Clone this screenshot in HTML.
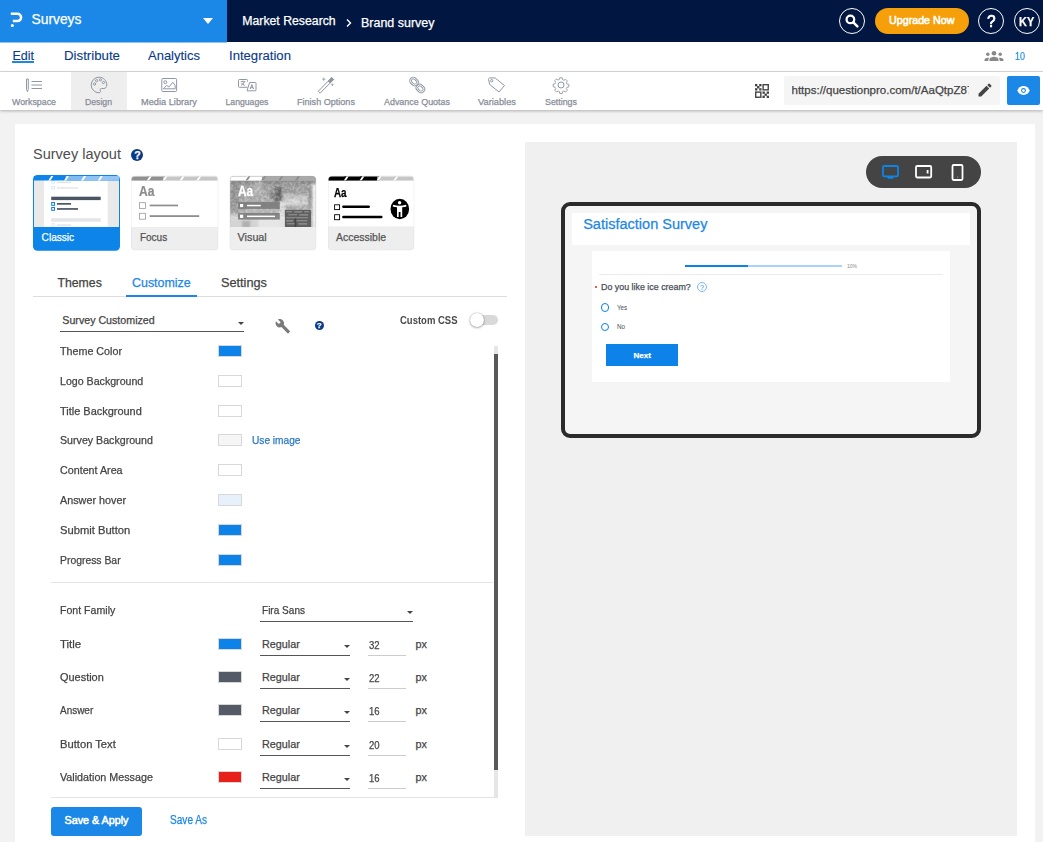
<!DOCTYPE html>
<html lang="en"><head><meta charset="utf-8"><title>Design - Brand survey</title>
<style>
*{box-sizing:border-box;margin:0;padding:0}
html,body{width:1043px;height:842px;overflow:hidden;background:#f2f2f2;font-family:"Liberation Sans","DejaVu Sans",sans-serif;color:#444;}
.a{position:absolute}
.t{position:absolute;white-space:nowrap;line-height:1;-webkit-text-stroke:0.25px}
svg{position:absolute;overflow:visible}
#hdr{position:absolute;left:0;top:0;width:1043px;height:42px;background:#011640}
#hdr .blue{position:absolute;left:0;top:0;width:227px;height:42.500px;background:#1b87e6}
#nav{position:absolute;left:0;top:42px;width:1043px;height:30px;background:#fff;border-bottom:1px solid #dcdcdc}
#tool{position:absolute;left:0;top:72px;width:1043px;height:38px;background:#fff;box-shadow:0 1px 3px rgba(0,0,0,.28)}
#card{position:absolute;left:15px;top:124px;width:1020px;height:730px;background:#fff}
#prev{position:absolute;left:525px;top:142px;width:492px;height:694px;background:#f0f0f0}
.circ{position:absolute;width:26px;height:26px;border:1.500px solid #fff;border-radius:50%}
.sw{position:absolute;left:218px;width:24px;height:12px;border:1px solid #d8d8d8}
.ul{position:absolute;height:1px;background:#555}
.ul2{position:absolute;height:1px;background:#ccc}
.car{position:absolute;width:0;height:0;border-left:3px solid transparent;border-right:3px solid transparent;border-top:3px solid #444}
</style></head><body>
<div id="hdr">
<div class="blue"></div>
<svg style="left:0;top:0" width="30" height="42" viewBox="0 0 30 42"><path d="M10.800 13.700H17.400a3.700 3.700 0 0 1 0 7.400H12.800" fill="none" stroke="#fff" stroke-width="2.500"/><circle cx="12.300" cy="25.400" r="1.500" fill="#fff"/></svg>
<span class="t" style="left:31.50px;top:11.00px;font-size:13.84px;line-height:16px;color:#fff;">Surveys</span>
<div class="a" style="left:203px;top:18px;width:0;height:0;border-left:5.5px solid transparent;border-right:5.5px solid transparent;border-top:6px solid #fff"></div>
<span class="t" style="left:242.30px;top:14.00px;font-size:12.28px;line-height:14px;color:#fff;">Market Research</span>
<svg style="left:345px;top:16.500px" width="8" height="12" viewBox="0 0 8 12"><path d="M2 2.500l3.500 3.500-3.500 3.500" fill="none" stroke="#fff" stroke-width="1.4"/></svg>
<span class="t" style="left:361.00px;top:16.00px;font-size:12.48px;line-height:14px;color:#fff;">Brand survey</span>
<div class="circ" style="left:839px;top:8px"></div>
<svg style="left:845.200px;top:14.300px" width="13.500" height="13.500" viewBox="0 0 12 12"><circle cx="4.8" cy="4.8" r="3.4" fill="none" stroke="#fff" stroke-width="2"/><path d="M7.4 7.4L11 11" stroke="#fff" stroke-width="2.2" stroke-linecap="round"/></svg>
<div class="a" style="left:875px;top:8px;width:94px;height:26px;border-radius:13px;background:#f5a00a"></div>
<span class="t" style="left:889.00px;top:14.00px;font-size:10.71px;line-height:12px;color:#fff;-webkit-text-stroke:0.55px;">Upgrade Now</span>
<div class="circ" style="left:978px;top:8px"></div>
<span class="t" style="left:987.20px;top:12.00px;font-size:17.00px;line-height:19px;color:#fff;transform:scaleX(0.9095);transform-origin:0 0;-webkit-text-stroke:0.7px;">?</span>
<div class="circ" style="left:1013.500px;top:8px"></div>
<span class="t" style="left:1019.20px;top:13.50px;font-size:13.50px;line-height:15px;color:#fff;font-weight:bold;transform:scaleX(0.8105);transform-origin:0 0;">KY</span></div>
<div id="nav"></div>
<div class="a" style="left:0;top:42px;width:227px;height:1px;background:#8ec4f3"></div>
<span class="t" style="left:12.50px;top:49.00px;font-size:12.48px;line-height:14px;color:#0a3a8a;-webkit-text-stroke:0.12px;">Edit</span>
<div class="a" style="left:12px;top:61px;width:22px;height:1.5px;background:#1b87e6"></div>
<span class="t" style="left:64.00px;top:48.00px;font-size:13.26px;line-height:15px;color:#0a3a8a;-webkit-text-stroke:0.12px;">Distribute</span>
<span class="t" style="left:148.00px;top:48.00px;font-size:12.99px;line-height:15px;color:#0a3a8a;-webkit-text-stroke:0.12px;">Analytics</span>
<span class="t" style="left:229.00px;top:48.00px;font-size:13.12px;line-height:15px;color:#0a3a8a;-webkit-text-stroke:0.12px;">Integration</span>
<svg style="left:984px;top:50px" width="20" height="12" viewBox="0 0 20 12"><g fill="#888"><circle cx="10" cy="3.3" r="2.3"/><path d="M5.5 11v-1.6c0-1.8 3-2.7 4.5-2.7s4.5.9 4.500 2.700V11z"/><circle cx="3.800" cy="4.300" r="1.700"/><path d="M0.500 11v-1.200c0-1.300 2-2.100 3.300-2.100 .5 0 1 .1 1.400.2-.7.600-.900 1.200-.900 1.900V11z"/><circle cx="16.200" cy="4.300" r="1.700"/><path d="M19.500 11v-1.200c0-1.300-2-2.100-3.300-2.100-.5 0-1 .1-1.400.2.7.600.900 1.200.900 1.900V11z"/></g></svg>
<span class="t" style="left:1015.00px;top:50.00px;font-size:11.00px;line-height:12px;color:#1b87e6;transform:scaleX(0.8173);transform-origin:0 0;-webkit-text-stroke:0.15px;">10</span>
<div id="tool">
<div class="a" style="left:71px;top:0;width:56px;height:38px;background:#eee"></div></div>
<span class="t" style="left:12.00px;top:97.00px;font-size:8.83px;line-height:10px;color:#878d98;">Workspace</span>
<span class="t" style="left:85.00px;top:97.00px;font-size:8.67px;line-height:10px;color:#878d98;">Design</span>
<span class="t" style="left:141.00px;top:97.00px;font-size:9.24px;line-height:10px;color:#878d98;">Media Library</span>
<span class="t" style="left:225.50px;top:97.00px;font-size:8.69px;line-height:10px;color:#878d98;">Languages</span>
<span class="t" style="left:297.00px;top:97.00px;font-size:9.07px;line-height:10px;color:#878d98;">Finish Options</span>
<span class="t" style="left:384.00px;top:97.00px;font-size:8.93px;line-height:10px;color:#878d98;">Advance Quotas</span>
<span class="t" style="left:478.00px;top:97.00px;font-size:9.28px;line-height:10px;color:#878d98;">Variables</span>
<span class="t" style="left:545.00px;top:97.00px;font-size:8.86px;line-height:10px;color:#878d98;">Settings</span>
<svg style="left:25px;top:77.500px" width="20" height="16" viewBox="0 0 20 16"><g fill="none" stroke="#9097a4" stroke-width="1"><path d="M1.500 1h1.800v10.500l-.9 2.200-.9-2.200z"/><path d="M6.500 3.500H17M6.500 7H17M6.500 10.500H17"/></g></svg>
<svg style="left:90px;top:76px" width="18" height="18" viewBox="0 0 18 18"><g fill="none" stroke="#9097a4" stroke-width="1"><path d="M9 1.200a7.800 7.800 0 1 0 0 15.600c1.400 0 1.900-1.100 1.300-2-.7-1.100-.1-2.300 1.300-2.300h2.200c1.700 0 3-1.400 3-3.500 0-4.300-3.500-7.800-7.800-7.800z"/><circle cx="4.600" cy="8" r="1.100"/><circle cx="6.600" cy="4.700" r="1.100"/><circle cx="10.400" cy="3.800" r="1.100"/><circle cx="13.400" cy="6.500" r="1.100"/></g></svg>
<svg style="left:161px;top:77.800px" width="17" height="15" viewBox="0 0 17 15"><g fill="none" stroke="#9097a4" stroke-width="1"><rect x=".8" y=".5" width="14.800" height="13" rx="1"/><circle cx="4.300" cy="4.200" r="1.500"/><path d="M2.300 10.800l3.300-3.300 2.300 1.500 4-4.700 2.300 3.200v3.300z"/></g></svg>
<svg style="left:238px;top:78.500px" width="19" height="13" viewBox="0 0 19 13"><g fill="none" stroke="#9097a4" stroke-width="1" stroke-width=".9"><path d="M9.500 8.300H1.300a.8.800 0 0 1-.8-.8V1.300a.8.800 0 0 1 .8-.8H8.700a.8.800 0 0 1 .8.800V2.600"/><path d="M9 11.800h8.200a.8.800 0 0 0 .8-.8V4.300a.8.800 0 0 0-.8-.8H11.600L9 11.800z"/><path d="M2.700 2.700h4.600M5 1.700v1M3 6.300c1.700-.8 2.900-2 3.400-3.600M3.600 4c.6 1 1.700 1.900 3.200 2.400M12.200 10l1.700-4.400 1.700 4.400M12.800 8.700h2.200"/></g></svg>
<svg style="left:317px;top:76px" width="18" height="18" viewBox="0 0 18 18"><g fill="none" stroke="#9097a4" stroke-width="1"><path d="M1.200 15.300L14.700 1.600l1.900 1.900L3.100 17.200z"/><path d="M11.300 5l1.900 1.900M14.700 1.600l1.900 1.900-3.400 3.400-1.900-1.900z" fill="#9097a4"/><path d="M6.800 1.600v3.200M5.200 3.200h3.200M15.400 7.500v2.400M14.200 8.700h2.400" stroke-width=".8"/></g></svg>
<svg style="left:408px;top:76px" width="18" height="18" viewBox="0 0 18 18"><g fill="none"><g stroke="#9097a4" stroke-width="2.600"><rect x="2.200" y="2.700" width="7.600" height="5.600" rx="2.800" transform="rotate(45 6 5.500)"/><rect x="8.600" y="9.700" width="7.600" height="5.600" rx="2.800" transform="rotate(45 12.400 12.500)"/></g><g stroke="#fff" stroke-width=".9"><rect x="2.200" y="2.700" width="7.600" height="5.600" rx="2.800" transform="rotate(45 6 5.500)"/><rect x="8.600" y="9.700" width="7.600" height="5.600" rx="2.800" transform="rotate(45 12.400 12.500)"/></g></g></svg>
<svg style="left:487px;top:76px" width="20" height="18" viewBox="0 0 20 18"><g fill="none" stroke="#9097a4" stroke-width="1"><path d="M1.500 3.500c0-1 .7-1.700 1.700-1.700l5 .2 9.300 7.500-5.500 6.500-9.300-7.500z"/><circle cx="4.700" cy="4.700" r="1.200"/></g></svg>
<svg style="left:552px;top:76px" width="18" height="18" viewBox="0 0 18 18"><g fill="none" stroke="#9097a4" stroke-width="1"><circle cx="9" cy="9" r="3"/><path d="M7.600 1h2.800l.4 2.100 1.500.7 1.800-1.200 2 2-1.200 1.800.7 1.500 2.100.4v2.800l-2.100.4-.7 1.500 1.200 1.800-2 2-1.800-1.200-1.500.7-.4 2.100H7.600l-.4-2.100-1.500-.7-1.800 1.200-2-2 1.200-1.800-.7-1.500L.3 10.800V8l2.100-.4.7-1.500-1.200-1.800 2-2 1.800 1.200 1.500-.7z" transform="translate(.9 .9) scale(.9)"/></g></svg>
<svg style="left:755px;top:84px" width="14" height="14" viewBox="0 0 15 15"><g fill="none" stroke="#444" stroke-width="1.500"><rect x="8.700" y=".75" width="5.500" height="5.500"/><rect x=".75" y="8.700" width="5.500" height="5.500"/></g><g fill="#444"><rect x="0" y="0" width="2.500" height="2.500"/><rect x="4.500" y="0" width="2.500" height="2.500"/><rect x="2.200" y="2.200" width="2.500" height="2.500"/><rect x="0" y="4.500" width="2.500" height="2.500"/><rect x="4.500" y="4.500" width="2.500" height="2.500"/><rect x="8" y="8" width="2.500" height="2.500"/><rect x="12.500" y="8" width="2.500" height="2.500"/><rect x="10.200" y="10.200" width="2.500" height="2.500"/><rect x="8" y="12.500" width="2.500" height="2.500"/><rect x="12.500" y="12.500" width="2.500" height="2.500"/></g></svg>
<div class="a" style="left:784px;top:76px;width:215.500px;height:29px;background:#f5f5f5;border-radius:2px"></div>
<div class="a" style="left:791.500px;top:78px;width:177px;height:24px;overflow:hidden">
<span class="t" style="left:0.00px;top:6.00px;font-size:11.52px;line-height:12px;color:#444;">https://questionpro.com/t/AaQtpZ87</span></div>
<svg style="left:977px;top:82px" width="16" height="16" viewBox="0 0 16 16"><path d="M1.500 11.800V14.500h2.700l8-8-2.700-2.700zM14.300 4.400a.7.700 0 0 0 0-1l-1.700-1.700a.7.700 0 0 0-1 0l-1.300 1.300 2.700 2.700z" fill="#444"/></svg>
<div class="a" style="left:1007px;top:76px;width:33px;height:29px;background:#1b87e6;border-radius:2px"></div>
<svg style="left:1016.500px;top:85px" width="13" height="11" viewBox="0 0 14 12"><path d="M7 1.200C3.800 1.200 1.200 3.200 0.200 6c1 2.800 3.600 4.800 6.800 4.800s5.800-2 6.800-4.800C12.800 3.200 10.200 1.200 7 1.200z" fill="#fff"/><circle cx="7" cy="6" r="2.700" fill="#1b87e6"/><circle cx="7" cy="6" r="1.500" fill="#fff"/></svg>
<div id="card"></div>
<span class="t" style="left:33.00px;top:146.00px;font-size:14.52px;line-height:16px;color:#4d4d4d;-webkit-text-stroke:0;">Survey layout</span>
<div class="a" style="left:131.200px;top:148.700px;width:12px;height:12px;border-radius:50%;background:#0a3a8a"></div>
<span class="t" style="left:134.20px;top:148.50px;font-size:10.50px;line-height:12px;color:#fff;font-weight:bold;">?</span>
<svg style="left:0;top:170px" width="450" height="90" viewBox="0 170 450 90"><defs><clipPath id="c1"><rect x="34" y="176" width="85" height="51"/></clipPath><clipPath id="c2"><rect x="131.5" y="176.3" width="86.200" height="73.500" rx="3.500"/></clipPath><clipPath id="c3"><rect x="230.200" y="176.300" width="85.500" height="73.500" rx="3.500"/></clipPath><clipPath id="c4"><rect x="328.500" y="176.300" width="85.200" height="73.500" rx="3.500"/></clipPath><filter id="bl" x="-10%" y="-10%" width="120%" height="120%"><feGaussianBlur stdDeviation="1.300"/></filter><filter id="bl2"><feGaussianBlur stdDeviation=".5"/></filter><filter id="nz" x="0" y="0" width="100%" height="100%"><feTurbulence type="fractalNoise" baseFrequency=".35" numOctaves="2" seed="7" result="n"/><feColorMatrix in="n" type="matrix" values="0 0 0 0 1  0 0 0 0 1  0 0 0 0 1  1.6 0 0 0 -.62"/></filter><filter id="nz2" x="0" y="0" width="100%" height="100%"><feTurbulence type="fractalNoise" baseFrequency=".3" numOctaves="2" seed="3" result="n"/><feColorMatrix in="n" type="matrix" values="0 0 0 0 0.25  0 0 0 0 0.25  0 0 0 0 0.25  1.6 0 0 0 -.66"/></filter></defs><rect x="33" y="175" width="87" height="75.700" rx="4.500" fill="#0c84e8"/><g clip-path="url(#c1)"><rect x="34" y="176" width="85" height="51" fill="#e9e9e9"/><rect x="44.100" y="176" width="63.600" height="51" fill="#fff"/><g fill="none" stroke="#d3e6f8" stroke-width=".8"><rect x="51.900" y="180.600" width="2.600" height="2.600"/><rect x="51.900" y="186.400" width="2.600" height="2.600"/><rect x="51.900" y="223.700" width="2.600" height="2.600"/></g><g fill="#e2e2e2"><rect x="57" y="181.700" width="14" height="1.300"/><rect x="57" y="187.300" width="21" height="1.300"/><rect x="57" y="224.400" width="14" height="1.300"/></g><rect x="51.200" y="218.200" width="49.500" height="3.500" fill="#e3e5e8"/><rect x="51.200" y="196.700" width="49.500" height="3.400" fill="#4a5564"/><g fill="#4a5564"><rect x="57" y="203" width="14" height="1.700"/><rect x="57" y="208.100" width="21" height="1.700"/></g><g fill="#fff" stroke="#0c84e8" stroke-width="1"><rect x="51.700" y="202.500" width="2.800" height="2.800"/><rect x="51.700" y="207.500" width="2.800" height="2.800"/></g><rect x="33" y="175" width="87" height="5.500" fill="#0c84e8"/><rect x="32.00" y="176" width="20.00" height="4.5" fill="none"/><rect x="50.00" y="176" width="17.70" height="4.5" fill="none"/><rect x="65.70" y="176" width="19.10" height="4.5" fill="#7fbaf1"/><rect x="82.80" y="176" width="18.70" height="4.5" fill="#8ec3f3"/><rect x="99.50" y="176" width="19.50" height="4.5" fill="#94c6f3"/><path d="M51.10 176H53.30L50.50 180.5H48.30z" fill="#fff"/><path d="M66.80 176H69.00L66.20 180.5H64.00z" fill="#fff"/><path d="M83.90 176H86.10L83.30 180.5H81.10z" fill="#fff"/><path d="M100.60 176H102.80L100.00 180.5H97.80z" fill="#fff"/></g><rect x="131" y="175.800" width="87.200" height="74.500" rx="4" fill="#e2e2e2"/><g clip-path="url(#c2)"><rect x="131" y="176" width="88" height="75" fill="#eee"/><rect x="131" y="176" width="88" height="51" fill="#fff"/><rect x="129.50" y="176.3" width="20.00" height="4.299999999999983" fill="#909090"/><rect x="147.50" y="176.3" width="17.70" height="4.299999999999983" fill="#909090"/><rect x="163.20" y="176.3" width="19.10" height="4.299999999999983" fill="#c6c6c6"/><rect x="180.30" y="176.3" width="18.70" height="4.299999999999983" fill="#c6c6c6"/><rect x="197.00" y="176.3" width="20.70" height="4.299999999999983" fill="#c6c6c6"/><path d="M149.60 176.3H151.80L149.00 180.6H146.80z" fill="#fff"/><path d="M165.30 176.3H167.50L164.70 180.6H162.50z" fill="#fff"/><path d="M182.40 176.3H184.60L181.80 180.6H179.60z" fill="#fff"/><path d="M199.10 176.3H201.30L198.50 180.6H196.30z" fill="#fff"/><g fill="#fff" stroke="#9a9a9a" stroke-width=".8"><rect x="139.500" y="202.700" width="6" height="5.700"/><rect x="139.500" y="213.300" width="6" height="5.900"/></g><g fill="#8e8e8e"><rect x="149.700" y="204.600" width="28.300" height="1.700"/><rect x="149.700" y="215.200" width="49.500" height="1.800"/></g></g><rect x="229.700" y="175.800" width="86.500" height="74.500" rx="4" fill="#e2e2e2"/><g clip-path="url(#c3)"><rect x="230" y="176" width="87" height="75" fill="#eee"/>
<svg x="230.200" y="176.300" width="85.500" height="50.700" viewBox="0 0 85.500 50.700" style="position:static;overflow:hidden"><rect width="86" height="51" fill="#a4a4a4"/><g filter="url(#bl)"><rect x="-3" y="-3" width="92" height="11" fill="#858585"/><rect x="-3" y="8" width="12" height="32" fill="#8e8e8e"/><rect x="9" y="9" width="36" height="10" fill="#9c9c9c"/><rect x="14" y="17" width="30" height="10" fill="#a8a8a8"/><rect x="24" y="6" width="8" height="12" fill="#b4b4b4"/><rect x="44" y="10" width="8" height="16" fill="#626262"/><rect x="40" y="15" width="6" height="8" fill="#7a7a7a"/><rect x="52" y="9" width="28" height="9" fill="#9a9a9a"/><rect x="53" y="18" width="27" height="12" fill="#c2c2c2"/><rect x="55" y="23" width="24" height="5" fill="#d8d8d8"/><rect x="78" y="12" width="4" height="18" fill="#8a8a8a"/><rect x="82" y="8" width="6" height="46" fill="#ececec"/><rect x="-3" y="36" width="58" height="18" fill="#d4d4d4"/><rect x="28" y="40" width="28" height="14" fill="#e6e6e6"/><rect x="49" y="25" width="6" height="28" fill="#e2e2e2"/><rect x="12" y="44" width="8" height="8" fill="#b0b0b0"/><rect x="0" y="28" width="8" height="10" fill="#9a9a9a"/><rect x="16" y="30" width="30" height="8" fill="#b8b8b8"/></g><rect x="0" y="4" width="86" height="40" filter="url(#nz)" opacity=".55"/><rect x="0" y="4" width="82" height="36" filter="url(#nz2)" opacity=".5"/><g filter="url(#bl2)"><rect x="54.700" y="33.600" width="26" height="18" fill="#5e5e5e"/><g fill="#9a9a9a"><rect x="56" y="35" width="6" height="1"/><rect x="64" y="35" width="8" height="1.200"/><rect x="74" y="35" width="5" height="1"/><rect x="58" y="38" width="9" height="1"/><rect x="69" y="38" width="9" height="1.200"/><rect x="56" y="41" width="22" height="1"/><rect x="56" y="44" width="7" height="1.200"/><rect x="66" y="44" width="11" height="1"/><rect x="57" y="47" width="8" height="1"/><rect x="68" y="47" width="9" height="1.200"/></g><rect x="64.500" y="42" width="1.500" height="9" fill="#444"/></g><g fill="#7b7b7b" opacity=".88"><rect x="7.900" y="25.800" width="41.700" height="6.800"/><rect x="7.900" y="36.600" width="41.700" height="6.700"/></g><g fill="#fff"><rect x="9.800" y="27.700" width="3.200" height="3.100"/><rect x="9.800" y="38.400" width="3.200" height="3.200"/><rect x="16.800" y="28.500" width="13.800" height="1.500"/><rect x="16.800" y="39.300" width="28" height="1.500"/></g><rect x="0" y="0" width="86" height="4.300" fill="#a6a6a6"/></svg><rect x="228.20" y="176.3" width="20.00" height="4.299999999999983" fill="#fff"/><rect x="246.20" y="176.3" width="17.70" height="4.299999999999983" fill="#fff"/><rect x="261.90" y="176.3" width="19.10" height="4.299999999999983" fill="#a9a9a9"/><rect x="279.00" y="176.3" width="18.70" height="4.299999999999983" fill="#a9a9a9"/><rect x="295.70" y="176.3" width="20.00" height="4.299999999999983" fill="#a9a9a9"/><path d="M248.30 176.3H250.50L247.70 180.6H245.50z" fill="#8b8b8b"/><path d="M264.00 176.3H266.20L263.40 180.6H261.20z" fill="#8b8b8b"/><path d="M281.10 176.3H283.30L280.50 180.6H278.30z" fill="#8b8b8b"/><path d="M297.80 176.3H300.00L297.20 180.6H295.00z" fill="#8b8b8b"/></g><rect x="328" y="175.800" width="86.200" height="74.500" rx="4" fill="#e2e2e2"/><g clip-path="url(#c4)"><rect x="328" y="176" width="87" height="75" fill="#eee"/><rect x="328" y="176" width="87" height="50.300" fill="#fff"/><rect x="326.50" y="176.3" width="20.00" height="4.299999999999983" fill="#000"/><rect x="344.50" y="176.3" width="17.70" height="4.299999999999983" fill="#000"/><rect x="360.20" y="176.3" width="19.10" height="4.299999999999983" fill="#000"/><rect x="377.30" y="176.3" width="18.70" height="4.299999999999983" fill="#c6c6c6"/><rect x="394.00" y="176.3" width="19.70" height="4.299999999999983" fill="#c6c6c6"/><path d="M346.60 176.3H348.80L346.00 180.6H343.80z" fill="#fff"/><path d="M362.30 176.3H364.50L361.70 180.6H359.50z" fill="#fff"/><path d="M379.40 176.3H381.60L378.80 180.6H376.60z" fill="#fff"/><path d="M396.10 176.3H398.30L395.50 180.6H393.30z" fill="#fff"/><g fill="#fff" stroke="#000" stroke-width=".9"><rect x="334.600" y="204.800" width="5" height="4.800"/><rect x="334.600" y="214.700" width="5" height="5"/></g><g fill="#000"><rect x="342.200" y="205.600" width="27.700" height="2.400" rx="1"/><rect x="342.200" y="215.800" width="40.300" height="2.400" rx="1"/><ellipse cx="399.800" cy="209" rx="9.300" ry="10.200"/></g><g fill="#fff"><circle cx="399.600" cy="202.800" r="1.700"/><path d="M393.100 204.800c2 .6 4.200 .9 6.500 .9s4.500-.3 6.500-.9l.4 1.600c-1.400 .4-2.800 .7-4.300 .9v9.600h-1.700v-4.800h-1.800v4.800h-1.700v-9.600c-1.500-.2-2.900-.5-4.300-.9z"/></g></g></svg>
<span class="t" style="left:41.60px;top:232.00px;font-size:10.12px;line-height:11px;color:#fff;">Classic</span>
<span class="t" style="left:139.10px;top:184.00px;font-size:13.80px;line-height:15px;color:#8c8c8c;font-weight:bold;transform:scaleX(0.8729);transform-origin:0 0;-webkit-text-stroke:0.2px;">Aa</span>
<span class="t" style="left:139.90px;top:232.00px;font-size:10.02px;line-height:11px;color:#555;">Focus</span>
<span class="t" style="left:238.10px;top:184.00px;font-size:13.80px;line-height:15px;color:#fff;font-weight:bold;transform:scaleX(0.8616);transform-origin:0 0;-webkit-text-stroke:0.3px;">Aa</span>
<span class="t" style="left:237.60px;top:231.00px;font-size:10.79px;line-height:12px;color:#555;">Visual</span>
<span class="t" style="left:334.10px;top:186.00px;font-size:12.00px;line-height:14px;color:#000;font-weight:bold;transform:scaleX(0.8213);transform-origin:0 0;">Aa</span>
<span class="t" style="left:336.10px;top:232.00px;font-size:10.46px;line-height:11px;color:#555;">Accessible</span>
<span class="t" style="left:57.50px;top:276.00px;font-size:12.26px;line-height:14px;color:#444;">Themes</span>
<span class="t" style="left:132.00px;top:276.00px;font-size:12.45px;line-height:14px;color:#1b87e6;">Customize</span>
<span class="t" style="left:221.00px;top:275.00px;font-size:12.73px;line-height:15px;color:#444;">Settings</span>
<div class="a" style="left:33px;top:296px;width:474px;height:1px;background:#ddd"></div>
<div class="a" style="left:126px;top:294.500px;width:71px;height:2px;background:#1b87e6"></div>
<span class="t" style="left:62.30px;top:314.00px;font-size:10.66px;line-height:12px;color:#444;">Survey Customized</span>
<div class="ul" style="left:60px;top:331px;width:184px"></div>
<div class="car" style="left:238px;top:322px"></div>
<svg style="left:276px;top:319px" width="14.500" height="14.500" viewBox="0 0 15 15"><path d="M14.300 12.300L8 6c.6-1.600.3-3.500-1-4.800C5.600-.2 3.600-.4 2 .4l2.900 2.900-2 2L0 2.400c-.8 1.600-.5 3.600.8 5 1.300 1.300 3.200 1.600 4.800 1l6.300 6.300c.3.300.7.300 1 0l1.500-1.500c.3-.3.300-.7-.1-.9z" fill="#7a7a7a"/></svg>
<div class="a" style="left:314.500px;top:320.500px;width:9px;height:9px;border-radius:50%;background:#0a3a8a"></div>
<span class="t" style="left:316.80px;top:321.30px;font-size:8.00px;line-height:9px;color:#fff;font-weight:bold;">?</span>
<span class="t" style="left:400.30px;top:314.00px;font-size:11.50px;line-height:12px;color:#4a4a4a;font-weight:bold;transform:scaleX(0.8256);transform-origin:0 0;-webkit-text-stroke:0;">Custom CSS</span>
<div class="a" style="left:474px;top:315px;width:24.200px;height:9.500px;border-radius:5px;background:#d9d9d9"></div>
<div class="a" style="left:469.500px;top:312.500px;width:14px;height:14px;border-radius:50%;background:#fff;box-shadow:0 0 1.5px rgba(0,0,0,.35),0 1px 2.5px rgba(0,0,0,.28)"></div>
<div class="a" style="left:494px;top:346px;width:4px;height:452px;background:#e6e6e6"></div>
<div class="a" style="left:494px;top:354px;width:4px;height:416px;background:#595959"></div>
<span class="t" style="left:60.00px;top:345.00px;font-size:10.80px;line-height:12px;color:#444;transform:scaleX(0.9932);transform-origin:0 0;">Theme Color</span>
<div class="sw" style="top:345px;background:#0d82e8;"></div>
<span class="t" style="left:60.00px;top:375.00px;font-size:10.80px;line-height:12px;color:#444;transform:scaleX(0.9839);transform-origin:0 0;">Logo Background</span>
<div class="sw" style="top:375px;background:#fff;"></div>
<span class="t" style="left:60.00px;top:405.00px;font-size:10.80px;line-height:12px;color:#444;transform:scaleX(1.0144);transform-origin:0 0;">Title Background</span>
<div class="sw" style="top:405px;background:#fff;"></div>
<span class="t" style="left:60.00px;top:434.00px;font-size:10.80px;line-height:12px;color:#444;transform:scaleX(0.9856);transform-origin:0 0;">Survey Background</span>
<div class="sw" style="top:434px;background:#f5f5f5;"></div>
<span class="t" style="left:60.00px;top:464.00px;font-size:10.80px;line-height:12px;color:#444;transform:scaleX(0.9929);transform-origin:0 0;">Content Area</span>
<div class="sw" style="top:464px;background:#fff;"></div>
<span class="t" style="left:60.00px;top:494.00px;font-size:10.80px;line-height:12px;color:#444;transform:scaleX(0.9995);transform-origin:0 0;">Answer hover</span>
<div class="sw" style="top:494px;background:#e6f1fc;"></div>
<span class="t" style="left:60.00px;top:524.00px;font-size:10.80px;line-height:12px;color:#444;transform:scaleX(1.0363);transform-origin:0 0;">Submit Button</span>
<div class="sw" style="top:524px;background:#0d82e8;"></div>
<span class="t" style="left:60.00px;top:554.00px;font-size:10.80px;line-height:12px;color:#444;transform:scaleX(0.9616);transform-origin:0 0;">Progress Bar</span>
<div class="sw" style="top:554px;background:#0d82e8;"></div>
<span class="t" style="left:251.50px;top:434.00px;font-size:10.80px;line-height:12px;color:#2b78c5;transform:scaleX(0.9395);transform-origin:0 0;">Use image</span>
<div class="a" style="left:51px;top:582px;width:442px;height:1px;background:#e4e4e4"></div>
<span class="t" style="left:60.00px;top:604.00px;font-size:10.80px;line-height:12px;color:#444;transform:scaleX(0.9803);transform-origin:0 0;">Font Family</span>
<span class="t" style="left:262.00px;top:604.00px;font-size:10.80px;line-height:12px;color:#444;transform:scaleX(0.9304);transform-origin:0 0;">Fira Sans</span>
<div class="ul" style="left:260px;top:621px;width:153px"></div>
<div class="car" style="left:407px;top:610.500px"></div>
<span class="t" style="left:60.00px;top:638.00px;font-size:10.80px;line-height:12px;color:#444;transform:scaleX(1.0598);transform-origin:0 0;">Title</span>
<div class="sw" style="top:638px;background:#0d82e8;"></div>
<span class="t" style="left:262.00px;top:638.00px;font-size:10.80px;line-height:12px;color:#444;">Regular</span>
<div class="ul" style="left:260px;top:655px;width:90px"></div>
<div class="car" style="left:344px;top:644.5px"></div>
<span class="t" style="left:368.80px;top:639.00px;font-size:10.80px;line-height:12px;color:#444;transform:scaleX(0.8824);transform-origin:0 0;">32</span>
<div class="ul2" style="left:368px;top:655px;width:38px"></div>
<span class="t" style="left:415.50px;top:638.00px;font-size:10.80px;line-height:12px;color:#444;">px</span>
<span class="t" style="left:60.00px;top:671.00px;font-size:10.80px;line-height:12px;color:#444;transform:scaleX(1.0133);transform-origin:0 0;">Question</span>
<div class="sw" style="top:671px;background:#545b67;"></div>
<span class="t" style="left:262.00px;top:671.00px;font-size:10.80px;line-height:12px;color:#444;">Regular</span>
<div class="ul" style="left:260px;top:688px;width:90px"></div>
<div class="car" style="left:344px;top:677.5px"></div>
<span class="t" style="left:368.80px;top:672.00px;font-size:10.80px;line-height:12px;color:#444;transform:scaleX(0.8824);transform-origin:0 0;">22</span>
<div class="ul2" style="left:368px;top:688px;width:38px"></div>
<span class="t" style="left:415.50px;top:671.00px;font-size:10.80px;line-height:12px;color:#444;">px</span>
<span class="t" style="left:60.00px;top:704.00px;font-size:10.80px;line-height:12px;color:#444;transform:scaleX(0.9219);transform-origin:0 0;">Answer</span>
<div class="sw" style="top:704px;background:#545b67;"></div>
<span class="t" style="left:262.00px;top:704.00px;font-size:10.80px;line-height:12px;color:#444;">Regular</span>
<div class="ul" style="left:260px;top:721px;width:90px"></div>
<div class="car" style="left:344px;top:710.5px"></div>
<span class="t" style="left:368.80px;top:705.00px;font-size:10.80px;line-height:12px;color:#444;transform:scaleX(0.8824);transform-origin:0 0;">16</span>
<div class="ul2" style="left:368px;top:721px;width:38px"></div>
<span class="t" style="left:415.50px;top:704.00px;font-size:10.80px;line-height:12px;color:#444;">px</span>
<span class="t" style="left:60.00px;top:738.00px;font-size:10.80px;line-height:12px;color:#444;transform:scaleX(1.0364);transform-origin:0 0;">Button Text</span>
<div class="sw" style="top:738px;background:#fff;"></div>
<span class="t" style="left:262.00px;top:738.00px;font-size:10.80px;line-height:12px;color:#444;">Regular</span>
<div class="ul" style="left:260px;top:755px;width:90px"></div>
<div class="car" style="left:344px;top:744.5px"></div>
<span class="t" style="left:368.80px;top:739.00px;font-size:10.80px;line-height:12px;color:#444;transform:scaleX(0.8824);transform-origin:0 0;">20</span>
<div class="ul2" style="left:368px;top:755px;width:38px"></div>
<span class="t" style="left:415.50px;top:738.00px;font-size:10.80px;line-height:12px;color:#444;">px</span>
<span class="t" style="left:60.00px;top:771.00px;font-size:10.80px;line-height:12px;color:#444;transform:scaleX(0.9940);transform-origin:0 0;">Validation Message</span>
<div class="sw" style="top:771px;background:#e8201c;"></div>
<span class="t" style="left:262.00px;top:771.00px;font-size:10.80px;line-height:12px;color:#444;">Regular</span>
<div class="ul" style="left:260px;top:788px;width:90px"></div>
<div class="car" style="left:344px;top:777.5px"></div>
<span class="t" style="left:368.80px;top:772.00px;font-size:10.80px;line-height:12px;color:#444;transform:scaleX(0.8824);transform-origin:0 0;">16</span>
<div class="ul2" style="left:368px;top:788px;width:38px"></div>
<span class="t" style="left:415.50px;top:771.00px;font-size:10.80px;line-height:12px;color:#444;">px</span>
<div class="a" style="left:51px;top:797px;width:447px;height:1px;background:#e4e4e4"></div>
<div class="a" style="left:51px;top:807px;width:91px;height:29px;border-radius:3px;background:#1b87e6"></div>
<span class="t" style="left:64.50px;top:814.00px;font-size:10.76px;line-height:12px;color:#fff;-webkit-text-stroke:0.55px;">Save &amp; Apply</span>
<span class="t" style="left:169.80px;top:813.00px;font-size:12.00px;line-height:14px;color:#1b87e6;transform:scaleX(0.8404);transform-origin:0 0;">Save As</span>
<div id="prev"></div>
<div class="a" style="left:866px;top:156px;width:115px;height:32px;border-radius:16px;background:#444"></div>
<svg style="left:881.500px;top:165px" width="18" height="15" viewBox="0 0 18 15"><rect x="1" y="1" width="15" height="10.300" rx="1.300" fill="none" stroke="#0c84e8" stroke-width="1.800"/><path d="M5.200 12h6.600l-.8 1.700h-5z" fill="#0c84e8"/></svg>
<svg style="left:914.500px;top:165px" width="18" height="14" viewBox="0 0 18 14"><rect x="1" y="1" width="15.200" height="11.500" rx="1.200" fill="none" stroke="#fff" stroke-width="1.800"/><rect x="11.700" y="5" width="1.800" height="3.500" fill="#fff"/></svg>
<svg style="left:950.600px;top:163.500px" width="14" height="18" viewBox="0 0 14 18"><rect x="1.500" y="1" width="10" height="15" rx="1.200" fill="none" stroke="#fff" stroke-width="1.800"/><rect x="6" y="12.500" width="1.200" height="1.200" fill="#888"/></svg>
<div class="a" style="left:561px;top:202px;width:420px;height:236px;border:4px solid #2b2b2b;border-radius:9px;background:#f5f5f5"></div>
<div class="a" style="left:572px;top:213px;width:398px;height:32px;background:#fff"></div>
<div class="a" style="left:592px;top:251px;width:358px;height:131px;background:#fff"></div>
<span class="t" style="left:583.20px;top:216.40px;font-size:14.53px;line-height:16px;color:#1b87e6;">Satisfaction Survey</span>
<div class="a" style="left:685px;top:264.500px;width:157px;height:2px;background:#a9d3f7"></div>
<div class="a" style="left:685px;top:264.500px;width:63px;height:2px;background:#0d82e8"></div>
<span class="t" style="left:847.00px;top:262.50px;font-size:5.00px;line-height:6px;color:#888;-webkit-text-stroke:0;">10%</span>
<div class="a" style="left:599px;top:274px;width:344px;height:1px;background:#ebebeb"></div>
<div class="a" style="left:595px;top:286px;width:2px;height:2px;border-radius:50%;background:#e8201c"></div>
<span class="t" style="left:601.00px;top:281.80px;font-size:8.90px;line-height:10px;color:#4a4f58;">Do you like ice cream?</span>
<div class="a" style="left:696.800px;top:282.200px;width:10.200px;height:10.200px;border-radius:50%;border:1px solid #7ab8f2"></div>
<span class="t" style="left:700.00px;top:284.00px;font-size:7.00px;line-height:7px;color:#1b87e6;-webkit-text-stroke:0;">?</span>
<div class="a" style="left:600.500px;top:303px;width:8.500px;height:8.500px;border-radius:50%;border:1.200px solid #0d82e8;background:#fff"></div>
<span class="t" style="left:617.00px;top:303.50px;font-size:6.30px;line-height:7px;color:#4a4f58;-webkit-text-stroke:0;">Yes</span>
<div class="a" style="left:600.500px;top:322.500px;width:8.500px;height:8.500px;border-radius:50%;border:1.200px solid #0d82e8;background:#fff"></div>
<span class="t" style="left:617.00px;top:323.00px;font-size:6.30px;line-height:7px;color:#4a4f58;-webkit-text-stroke:0;">No</span>
<div class="a" style="left:606px;top:344px;width:72px;height:22px;background:#0d82e8"></div>
<span class="t" style="left:633.50px;top:351.00px;font-size:8.07px;line-height:9px;color:#fff;font-weight:bold;">Next</span>
</body></html>
